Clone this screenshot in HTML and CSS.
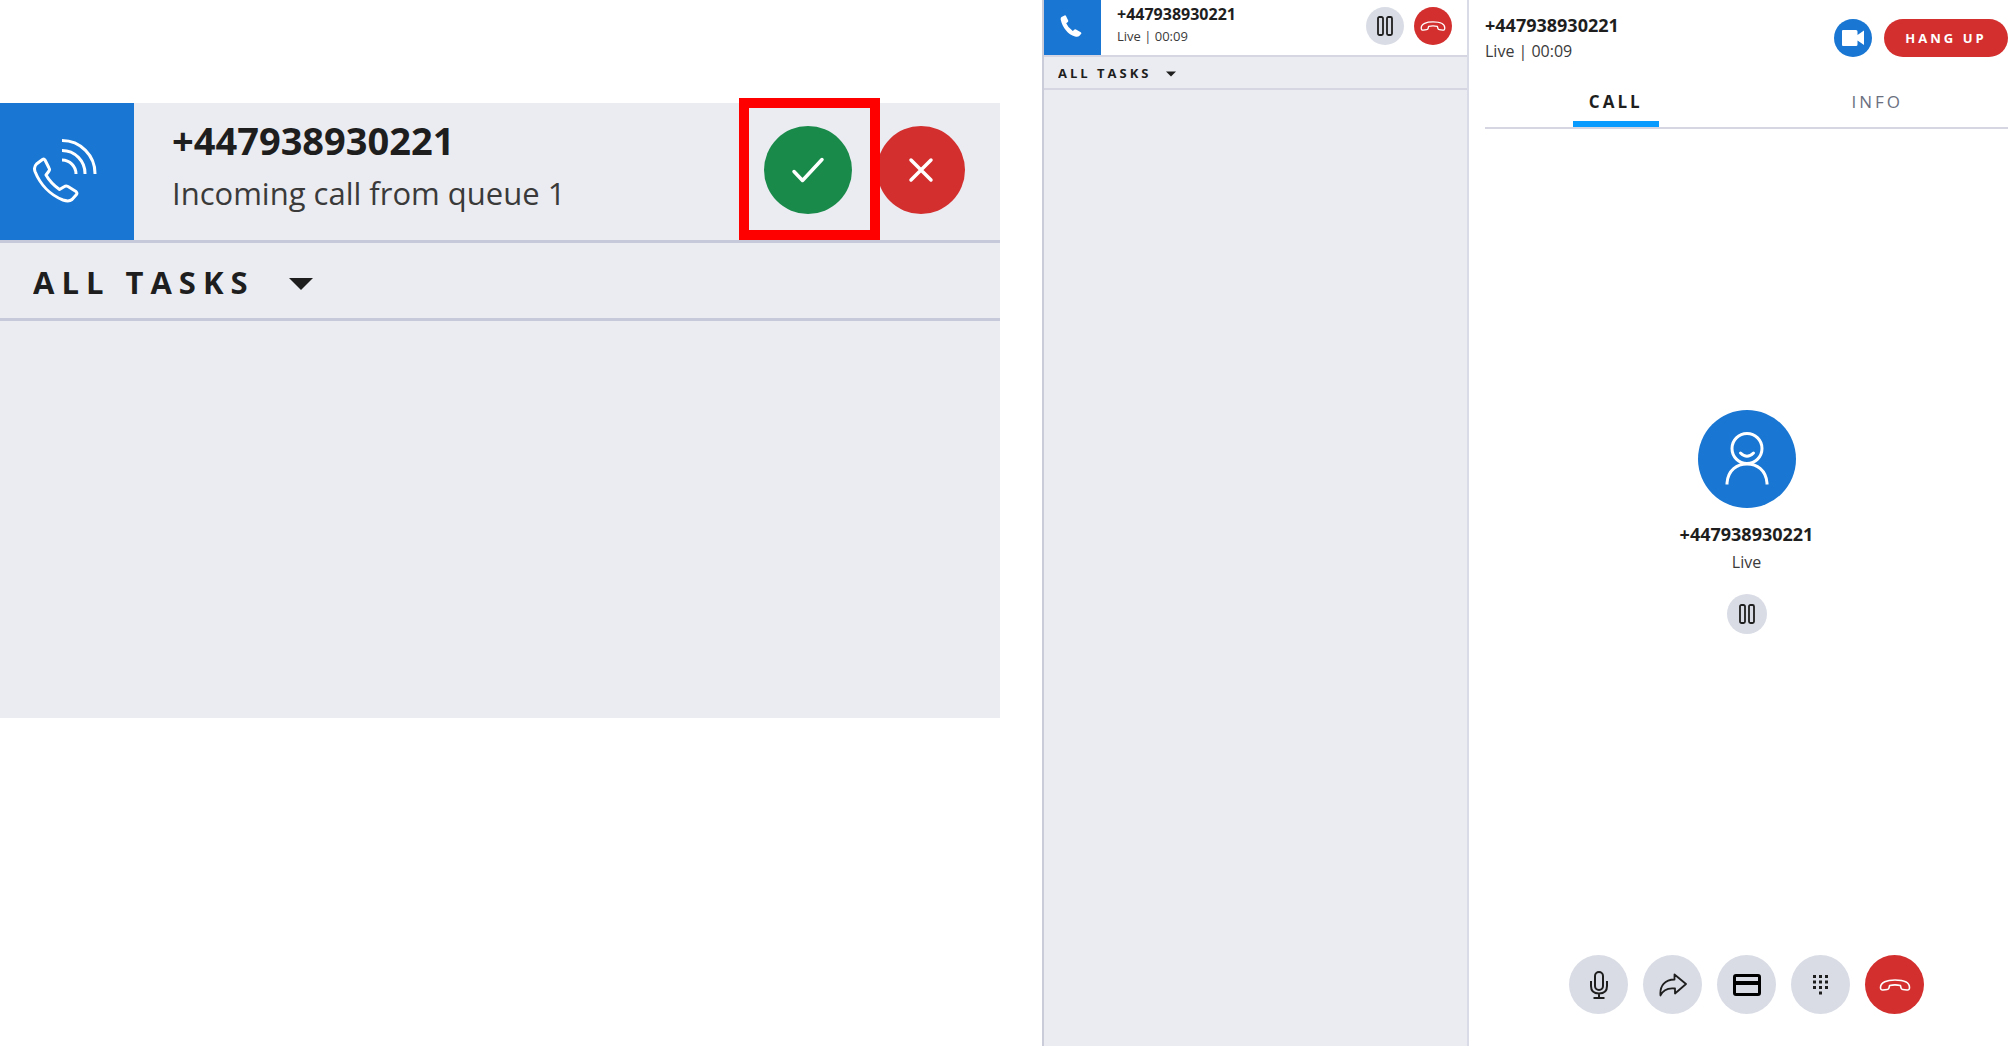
FILE: index.html
```html
<!DOCTYPE html>
<html lang="en">
<head>
<meta charset="utf-8">
<meta name="viewport" content="width=device-width, initial-scale=1">
<title>Incoming call</title>
<link rel="stylesheet" href="styles.css">
</head>
<body>
<svg width="0" height="0" class="sprite" aria-hidden="true">
  <symbol id="pause" viewBox="0 0 16 20"><g fill="none" stroke="currentColor" stroke-width="1.8"><rect x="1" y="1" width="5" height="18" rx="1.5"/><rect x="10" y="1" width="5" height="18" rx="1.5"/></g></symbol>
  <symbol id="hangup" viewBox="0 0 32 14"><path d="M1.500 9.500C1.500 4 8 2 16 2S30.500 4 30.500 9.500Q30.500 12.300 28 12L23.800 11.500Q22.300 11.300 22 9.800L21.400 7.500Q16 6.300 10.600 7.500L10 9.800Q9.700 11.300 8.200 11.500L4 12Q1.500 12.300 1.500 9.500Z" fill="none" stroke="currentColor" stroke-width="1.600" stroke-linejoin="round"/></symbol>
  <symbol id="caret" viewBox="0 0 24 12"><path d="M0 0H24L12 12Z" fill="currentColor"/></symbol>
</svg>
<div class="page">
  <section class="incoming" aria-label="Incoming call">
    <header class="task">
      <div class="badge">
        <svg width="64" height="64" viewBox="0 0 64 64" fill="none" stroke="currentColor" stroke-width="3" stroke-linejoin="round"><path d="M9.500 20.500L3.500 25Q0.500 28 2 32.500C7 45 17 56 30 61Q36 63 39 60.500L43.500 55.500Q44.500 54 43 52.500L35 47.500Q33 46.500 31.500 47.500L26.500 50.500Q17.500 44 13 36L16 32Q17 30.500 16 29L12 21Q11 19.500 9.500 20.500Z"/><path d="M29 1.500A33 33 0 0 1 62 35M29 11.500A23 23 0 0 1 52 35M29 21A14 14 0 0 1 43 35"/></svg>
      </div>
      <div class="who">
        <strong>+447938930221</strong>
        <span>Incoming call from queue 1</span>
      </div>
      <div class="answer">
        <span class="highlight">
          <button class="round accept" type="button" aria-label="Accept"><svg width="34" height="26" viewBox="0 0 34 26"><path d="M3 14.500L11.500 23.500L31 2.500" fill="none" stroke="currentColor" stroke-width="3.500" stroke-linecap="round" stroke-linejoin="round"/></svg></button>
        </span>
        <button class="round decline" type="button" aria-label="Decline"><svg width="26" height="26" viewBox="0 0 26 26"><path d="M3 3L23 23M23 3L3 23" stroke="currentColor" stroke-width="3.500" stroke-linecap="round"/></svg></button>
      </div>
    </header>
    <div class="filter">
      <select aria-label="Task filter"><option>ALL TASKS</option></select>
      <svg class="caret"><use href="#caret"/></svg>
    </div>
    <div class="list"></div>
  </section>

  <div class="live">
    <aside class="tasks" aria-label="Tasks">
      <header class="task">
        <div class="badge">
          <svg width="22" height="22" viewBox="0 0 22 22" fill="currentColor"><path d="M4.500 0.500Q5.500 0 6 1L8.200 5.500Q8.500 6.500 7.500 7.200L6.200 8.300Q8 12.800 12.800 16L14.500 14.500Q15.200 14 16 14.500L20.800 17.300Q21.800 18 21 19L19.500 20.800Q18 22.200 15 21.500C8 19.500 2.500 12.500 0.800 5Q0.300 3 1.500 2Z"/></svg>
        </div>
        <div class="who">
          <strong>+447938930221</strong>
          <span>Live | 00:09</span>
        </div>
        <div class="answer">
          <button class="round muted" type="button" aria-label="Hold"><svg width="16" height="20"><use href="#pause"/></svg></button>
          <button class="round decline" type="button" aria-label="Hang up"><svg width="26" height="12"><use href="#hangup"/></svg></button>
        </div>
      </header>
      <div class="filter">
        <select aria-label="Task filter"><option>ALL TASKS</option></select>
        <svg class="caret"><use href="#caret"/></svg>
      </div>
    </aside>

    <main class="call">
      <header class="call-head">
        <div class="who">
          <strong>+447938930221</strong>
          <span>Live | 00:09</span>
        </div>
        <button class="round video" type="button" aria-label="Video"><svg width="22" height="16" viewBox="0 0 22 16" fill="currentColor"><path d="M1 0H14Q15.500 0 15.500 1.500V5L22 0.500V15L15.500 10.500V14.500Q15.500 16 14 16H1Q0 16 0 15V1Q0 0 1 0Z"/></svg></button>
        <button class="hang-up" type="button">HANG UP</button>
      </header>
      <nav class="tabs">
        <a class="tab active" href="#call"><span>CALL</span></a>
        <a class="tab" href="#info"><span>INFO</span></a>
      </nav>
      <section class="contact" id="call">
        <div class="avatar"><svg width="44" height="54" viewBox="0 0 44 54" fill="none" stroke="currentColor" stroke-width="3" stroke-linecap="round"><circle cx="22" cy="16.500" r="15"/><path d="M15.500 21Q22 27.500 28.500 21"/><path d="M2 52.500V51C3 38 12 32 22 32S41 38 42 51V52.500" stroke-linecap="butt"/></svg></div>
        <strong>+447938930221</strong>
        <span>Live</span>
        <button class="round muted" type="button" aria-label="Hold"><svg width="16" height="20"><use href="#pause"/></svg></button>
      </section>
      <footer class="actions">
        <button class="round muted" type="button" aria-label="Mute"><svg width="18" height="28" viewBox="0 0 18 28" fill="none" stroke="currentColor" stroke-width="2"><rect x="5" y="1" width="8" height="18" rx="4"/><path d="M1 10V15Q1 22.500 9 22.500T17 15V10M9 22.500V27M3.500 27H14.500"/></svg></button>
        <button class="round muted" type="button" aria-label="Transfer"><svg width="28" height="24" viewBox="0 0 28 24" fill="none" stroke="currentColor" stroke-width="1.800" stroke-linejoin="round"><path d="M15.500 1.500L27 11L16 20.500V15.500C8 14.500 4 17 1.500 22.500C0.500 13 6 6.500 15.500 6.500Z"/></svg></button>
        <button class="round muted" type="button" aria-label="Payment"><svg width="28" height="22" viewBox="0 0 28 22"><rect x="1.500" y="1.500" width="25" height="19" rx="1.500" fill="none" stroke="#000" stroke-width="3"/><path d="M1 7H27V11H1Z" fill="#000"/></svg></button>
        <button class="round muted" type="button" aria-label="Keypad"><svg width="15" height="20" viewBox="0 0 15 20"><path d="M0 0h3v3H0zM6 0h3v3H6zM12 0h3v3H12zM0 5.500h3v3H0zM6 5.500h3v3H6zM12 5.500h3v3H12zM0 11h3v3H0zM6 11h3v3H6zM12 11h3v3H12zM6 16.500h3v3H6z" fill="currentColor"/></svg></button>
        <button class="round decline" type="button" aria-label="Hang up"><svg width="32" height="14"><use href="#hangup"/></svg></button>
      </footer>
    </main>
  </div>
</div>
</body>
</html>
```
FILE: styles.css
```css
* { box-sizing: border-box; }

body {
  margin: 0;
  background: #fff;
  color: #1e1e1e;
  font-family: "Open Sans", "Noto Sans", sans-serif;
}

.sprite { position: absolute; }

svg { display: block; }

button, select {
  border: 0;
  margin: 0;
  padding: 0;
  font: inherit;
  color: inherit;
}

.page {
  display: grid;
  grid-template-columns: minmax(0, 1000fr) minmax(0, 974fr);
  column-gap: 42px;
  min-height: 100vh;
}

.task { display: flex; align-items: center; }

.badge {
  display: flex;
  align-items: center;
  justify-content: center;
  align-self: stretch;
  background: #1976d2;
  color: #fff;
}

.who {
  display: flex;
  flex-direction: column;
  flex: 1;
  white-space: nowrap;
}

.who span, .contact span { color: #3a3a3a; }

.answer { display: flex; }

.round {
  display: flex;
  align-items: center;
  justify-content: center;
  flex: none;
  border-radius: 50%;
}

.accept { background: #1a8a4b; color: #fff; }
.decline { background: #d32f2f; color: #fff; }
.muted { background: #d9dce5; color: #1e1e1e; }
.video { background: #1976d2; color: #fff; }

.filter { display: flex; align-items: center; }

.filter select {
  appearance: none;
  background: transparent;
  font-weight: 700;
}

/* Incoming call */
.incoming {
  align-self: start;
  margin-top: 103px;
  background: #ebecf1;
}

.incoming .task { height: 140px; border-bottom: 3px solid #c5c9d9; }
.incoming .badge { width: 134px; padding: 0 4px 2px 0; }
.incoming .who { padding-left: 38px; padding-bottom: 11px; }
.incoming .who strong { font-size: 38px; line-height: 54px; }
.incoming .who span { font-size: 31px; line-height: 52px; }
.incoming .answer { gap: 25px; padding: 0 35px 3px 0; }
.incoming .round { width: 88px; height: 88px; }
.incoming .filter { height: 78px; padding: 2px 0 0 33px; gap: 32px; border-bottom: 3px solid #c5c9d9; }
.incoming select { width: 224px; font-size: 31px; letter-spacing: 7px; }
.incoming .caret { width: 24px; height: 12px; margin-top: 4px; }
.incoming .list { height: 397px; }

.highlight { position: relative; }

.highlight::after {
  content: "";
  position: absolute;
  z-index: 1;
  inset: -28px -28px -26px -25px;
  border: 10px solid #f00;
  pointer-events: none;
}

/* Live call */
.live {
  display: grid;
  grid-template-columns: minmax(0, 427fr) minmax(0, 547fr);
}

.tasks {
  background: #ebecf1;
  border-left: 2px solid #cbccd9;
  border-right: 2px solid #d9dbe6;
}

.tasks .task { height: 57px; background: #fff; border-bottom: 2px solid #d5d6e2; }
.tasks .badge { width: 57px; padding: 0 3px 4px 0; }
.tasks .who { padding: 0 0 6px 16px; }
.tasks .who strong { font-size: 16px; line-height: 22px; }
.tasks .who span { font-size: 13px; line-height: 22px; }
.tasks .answer { gap: 10px; padding: 0 15px 4px 0; }
.tasks .round { width: 38px; height: 38px; }
.tasks .filter { height: 33px; padding: 0 0 0 14px; gap: 12px; border-bottom: 2px solid #d5d6e2; }
.tasks select { width: 96px; font-size: 13px; letter-spacing: 3px; }
.tasks .caret { width: 10px; height: 6px; margin-top: 2px; }

.call { display: flex; flex-direction: column; padding: 0 8px 32px 16px; }
.call-head { display: flex; align-items: center; height: 75px; }
.call-head .who strong { font-size: 18px; line-height: 26px; }
.call-head .who span { font-size: 16px; line-height: 26px; }
.video { width: 38px; height: 38px; margin-right: 12px; }

.hang-up {
  width: 124px;
  height: 38px;
  border-radius: 19px;
  background: #d32f2f;
  color: #fff;
  font-size: 13px;
  font-weight: 700;
  letter-spacing: 3px;
}

.tabs { display: flex; height: 54px; border-bottom: 2px solid #d5d6e2; }

.tab {
  display: flex;
  flex: 1;
  justify-content: center;
  color: #6b7080;
  font-size: 17px;
  line-height: 54px;
  letter-spacing: 3px;
  text-decoration: none;
}

.tab span { width: 86px; text-align: center; }

.tab.active { color: #1e1e1e; font-weight: 700; }
.tab.active span { border-bottom: 6px solid #0a9bff; }

.contact {
  display: flex;
  flex: 1;
  flex-direction: column;
  align-items: center;
  justify-content: center;
  padding-bottom: 40px;
}

.contact strong { margin-top: 12px; font-size: 18px; line-height: 28px; }
.contact span { font-size: 16px; line-height: 28px; }
.contact .round { width: 40px; height: 40px; margin-top: 18px; }

.avatar {
  display: flex;
  align-items: center;
  justify-content: center;
  width: 98px;
  height: 98px;
  border-radius: 50%;
  background: #1976d2;
  color: #fff;
}

.actions { display: flex; justify-content: center; gap: 15px; }
.actions .round { width: 59px; height: 59px; }
```
